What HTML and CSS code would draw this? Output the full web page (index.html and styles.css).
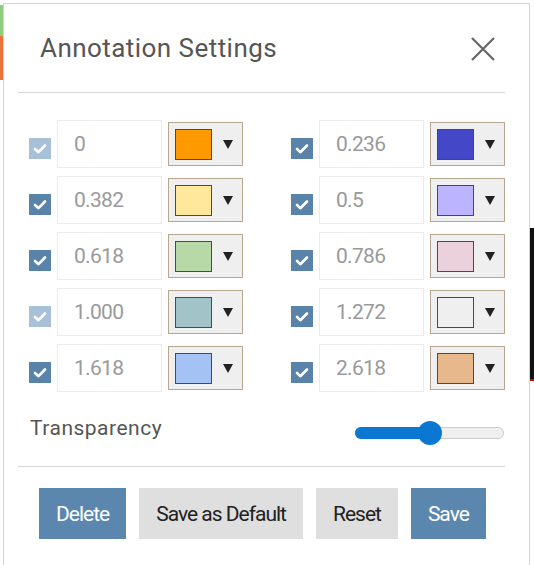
FILE: index.html
```html
<!DOCTYPE html>
<html lang="en">
<head>
<meta charset="utf-8">
<title>Annotation Settings</title>
<link rel="stylesheet" href="styles.css">
</head>
<body>
<div class="page">
  <div class="edge-left">
    <div class="bar bar-green"></div>
    <div class="bar bar-orange"></div>
  </div>
  <div class="dialog">
    <div class="inner">
      <div class="header">
        <h1 class="title">Annotation Settings</h1>
        <svg class="close" width="24" height="24" viewBox="0 0 24 24"><path d="M1 1 L23 23 M23 1 L1 23" stroke="#666" stroke-width="2.2" fill="none"/></svg>
      </div>

      <div class="levels">
        <div class="level">
          <span class="check disabled"><svg width="22" height="21" viewBox="0 0 22 21"><path d="M6 11 L9.5 14.2 L16 7.5" stroke="#fff" stroke-width="2.6" fill="none" stroke-linecap="round" stroke-linejoin="round"/></svg></span>
          <span class="value">0</span>
          <span class="color-btn"><span class="swatch" style="background:#ff9900"></span><span class="tri"></span></span>
        </div>
        <div class="level">
          <span class="check"><svg width="22" height="21" viewBox="0 0 22 21"><path d="M6 11 L9.5 14.2 L16 7.5" stroke="#fff" stroke-width="2.6" fill="none" stroke-linecap="round" stroke-linejoin="round"/></svg></span>
          <span class="value">0.236</span>
          <span class="color-btn"><span class="swatch" style="background:#4347c8"></span><span class="tri"></span></span>
        </div>
        <div class="level">
          <span class="check"><svg width="22" height="21" viewBox="0 0 22 21"><path d="M6 11 L9.5 14.2 L16 7.5" stroke="#fff" stroke-width="2.6" fill="none" stroke-linecap="round" stroke-linejoin="round"/></svg></span>
          <span class="value">0.382</span>
          <span class="color-btn"><span class="swatch" style="background:#ffe79b"></span><span class="tri"></span></span>
        </div>
        <div class="level">
          <span class="check"><svg width="22" height="21" viewBox="0 0 22 21"><path d="M6 11 L9.5 14.2 L16 7.5" stroke="#fff" stroke-width="2.6" fill="none" stroke-linecap="round" stroke-linejoin="round"/></svg></span>
          <span class="value">0.5</span>
          <span class="color-btn"><span class="swatch" style="background:#bdb4ff"></span><span class="tri"></span></span>
        </div>
        <div class="level">
          <span class="check"><svg width="22" height="21" viewBox="0 0 22 21"><path d="M6 11 L9.5 14.2 L16 7.5" stroke="#fff" stroke-width="2.6" fill="none" stroke-linecap="round" stroke-linejoin="round"/></svg></span>
          <span class="value">0.618</span>
          <span class="color-btn"><span class="swatch" style="background:#b7d9a7"></span><span class="tri"></span></span>
        </div>
        <div class="level">
          <span class="check"><svg width="22" height="21" viewBox="0 0 22 21"><path d="M6 11 L9.5 14.2 L16 7.5" stroke="#fff" stroke-width="2.6" fill="none" stroke-linecap="round" stroke-linejoin="round"/></svg></span>
          <span class="value">0.786</span>
          <span class="color-btn"><span class="swatch" style="background:#ead1dc"></span><span class="tri"></span></span>
        </div>
        <div class="level">
          <span class="check disabled"><svg width="22" height="21" viewBox="0 0 22 21"><path d="M6 11 L9.5 14.2 L16 7.5" stroke="#fff" stroke-width="2.6" fill="none" stroke-linecap="round" stroke-linejoin="round"/></svg></span>
          <span class="value">1.000</span>
          <span class="color-btn"><span class="swatch" style="background:#a2c4c9"></span><span class="tri"></span></span>
        </div>
        <div class="level">
          <span class="check"><svg width="22" height="21" viewBox="0 0 22 21"><path d="M6 11 L9.5 14.2 L16 7.5" stroke="#fff" stroke-width="2.6" fill="none" stroke-linecap="round" stroke-linejoin="round"/></svg></span>
          <span class="value">1.272</span>
          <span class="color-btn"><span class="swatch" style="background:#efefef"></span><span class="tri"></span></span>
        </div>
        <div class="level">
          <span class="check"><svg width="22" height="21" viewBox="0 0 22 21"><path d="M6 11 L9.5 14.2 L16 7.5" stroke="#fff" stroke-width="2.6" fill="none" stroke-linecap="round" stroke-linejoin="round"/></svg></span>
          <span class="value">1.618</span>
          <span class="color-btn"><span class="swatch" style="background:#a4c2f4"></span><span class="tri"></span></span>
        </div>
        <div class="level">
          <span class="check"><svg width="22" height="21" viewBox="0 0 22 21"><path d="M6 11 L9.5 14.2 L16 7.5" stroke="#fff" stroke-width="2.6" fill="none" stroke-linecap="round" stroke-linejoin="round"/></svg></span>
          <span class="value">2.618</span>
          <span class="color-btn"><span class="swatch" style="background:#e6b88b"></span><span class="tri"></span></span>
        </div>
      </div>

      <div class="transparency">
        <span class="label">Transparency</span>
        <div class="slider">
          <div class="fill"></div>
          <div class="thumb"></div>
        </div>
      </div>

      <div class="actions">
        <button class="btn primary">Delete</button>
        <button class="btn secondary">Save as Default</button>
        <button class="btn secondary">Reset</button>
        <button class="btn primary">Save</button>
      </div>
    </div>
  </div>
  <div class="edge-right">
    <div class="dark-block"></div>
  </div>
</div>
</body>
</html>
```

FILE: styles.css
```css
* { box-sizing: border-box; }

html, body {
  margin: 0;
  padding: 0;
  background: #ffffff;
}

body {
  width: 534px;
  height: 565px;
  overflow: hidden;
  font-family: Roboto, "Liberation Sans", sans-serif;
}

.page {
  display: flex;
  align-items: flex-start;
  width: 534px;
  height: 565px;
}

.edge-left {
  width: 3px;
  flex: none;
  padding-top: 5px;
}

.bar { width: 3px; }
.bar-green { height: 31px; background: #8fcf7b; }
.bar-orange { height: 44px; background: #e8743b; }

.dialog {
  width: 527px;
  flex: none;
  height: 570px;
  margin-top: 3px;
  border: 1px solid #d4d4d4;
  background: #ffffff;
}

.inner {
  padding: 0 24px 0 14px;
}

.header {
  height: 89px;
  display: flex;
  align-items: center;
  justify-content: space-between;
  padding: 0 10px 0 22px;
  border-bottom: 1px solid #d6d6d6;
}

.title {
  margin: 0;
  font-size: 26px;
  font-weight: 400;
  letter-spacing: 0.45px;
  color: #555555;
}

.close { display: block; margin-top: 2px; }

.levels {
  display: grid;
  grid-template-columns: 215px 215px;
  column-gap: 47px;
  row-gap: 8px;
  margin-top: 27px;
  padding-left: 11px;
}

.level {
  display: flex;
  align-items: center;
  height: 48px;
}

.check {
  width: 22px;
  height: 21px;
  flex: none;
  margin-top: 8px;
  margin-right: 6px;
  background: #5a83aa;
  display: flex;
}
.check.disabled { background: #a9c1d8; }
.check svg { display: block; }

.value {
  width: 105px;
  height: 48px;
  flex: none;
  border: 1px solid #ebebeb;
  padding-left: 16px;
  display: flex;
  align-items: center;
  font-size: 21px;
  letter-spacing: -0.7px;
  color: #9a9a9a;
}

.color-btn {
  width: 75px;
  height: 44px;
  flex: none;
  margin-left: 6px;
  border: 1px solid #b9a690;
  background: #efefef;
  display: flex;
  align-items: center;
  padding-left: 6px;
}

.swatch {
  width: 37px;
  height: 31px;
  border: 1px solid #4a4a4a;
  flex: none;
}

.tri {
  width: 0;
  height: 0;
  margin-left: 11px;
  border-left: 5px solid transparent;
  border-right: 5px solid transparent;
  border-top: 9px solid #222222;
}

.transparency {
  display: flex;
  align-items: center;
  justify-content: space-between;
  height: 40px;
  margin-top: 21px;
  padding-left: 12px;
  padding-right: 1px;
}

.label {
  font-size: 21px;
  letter-spacing: 0.5px;
  color: #555555;
  margin-bottom: 11px;
}

.slider {
  position: relative;
  width: 149px;
  height: 12px;
  border: 1px solid #cccccc;
  border-radius: 6px;
  background: #efefef;
}

.fill {
  width: 75px;
  height: 12px;
  margin: -1px 0 0 -1px;
  border-radius: 6px 0 0 6px;
  background: #0a78d2;
}

.thumb {
  position: absolute;
  left: 62px;
  top: -7px;
  width: 24px;
  height: 24px;
  border-radius: 50%;
  background: #0a78d2;
}

.actions {
  border-top: 1px solid #d6d6d6;
  margin-top: 13px;
  padding-top: 21px;
  padding-left: 21px;
  display: flex;
  gap: 13px;
}

.btn {
  height: 51px;
  padding: 0 17px;
  border: none;
  font-family: Roboto, "Liberation Sans", sans-serif;
  font-size: 21px;
  letter-spacing: -1px;
  cursor: pointer;
}

.primary {
  background: #5b87ae;
  color: #ffffff;
}

.secondary {
  background: #dfdfdf;
  color: #222222;
}

.edge-right {
  width: 4px;
  flex: none;
  padding-top: 228px;
}

.dark-block {
  width: 4px;
  height: 153px;
  background: #111111;
  border-bottom: 2px solid #e00000;
}
```
